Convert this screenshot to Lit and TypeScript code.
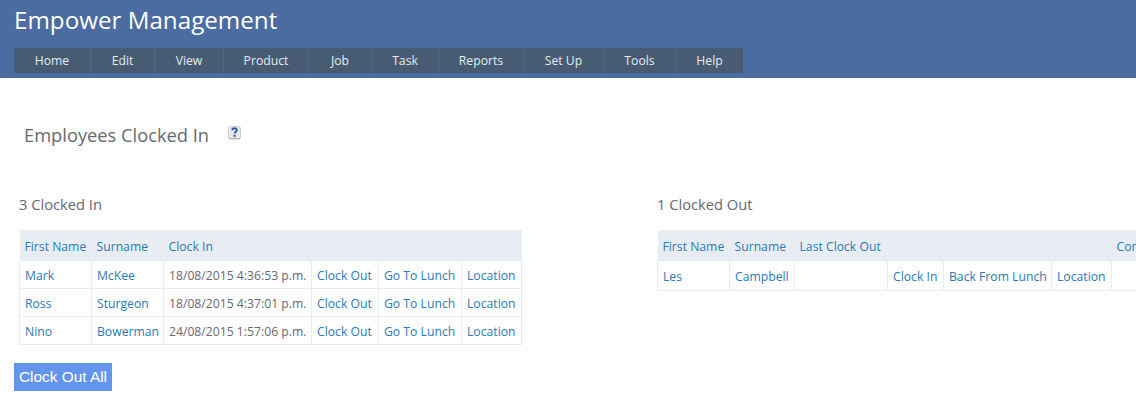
import { css, html, LitElement } from 'lit';
import { customElement } from 'lit/decorators.js';

const MENU = ['Home', 'Edit', 'View', 'Product', 'Job', 'Task', 'Reports', 'Set Up', 'Tools', 'Help'];

const CLOCKED_IN = [
  { first: 'Mark', last: 'McKee', time: '18/08/2015 4:36:53 p.m.' },
  { first: 'Ross', last: 'Sturgeon', time: '18/08/2015 4:37:01 p.m.' },
  { first: 'Nino', last: 'Bowerman', time: '24/08/2015 1:57:06 p.m.' },
];

@customElement('app-root')
export class AppRoot extends LitElement {
  static override styles = css`
    :host {
      display: block;
      width: 1136px;
      height: 418px;
      overflow: hidden;
      background: #fff;
      font-family: 'Open Sans', 'Liberation Sans', sans-serif;
      font-size: 12.2px;
      color: #666a70;
    }
    .banner {
      height: 78px;
      box-sizing: border-box;
      padding: 5px 14px 0;
      background: #4a6ca0;
    }
    .brand {
      height: 43px;
      font-size: 24.2px;
      line-height: 30px;
      color: #fff;
    }
    .menu {
      display: grid;
      grid-template-columns: 76px 64px 69px 85px 63px 67px 85px 80px 72px 68px;
      width: 729px;
      height: 25px;
    }
    .menu span {
      display: flex;
      align-items: center;
      justify-content: center;
      background: #475c72;
      border-left: 1px solid #4f6785;
      color: #e6ebf0;
      font-size: 12.2px;
    }
    .menu span:first-child {
      border-left: none;
    }
    .heading {
      display: flex;
      align-items: flex-start;
      gap: 19px;
      padding: 45px 0 0 24px;
      height: 72px;
      box-sizing: border-box;
      font-size: 18.3px;
      line-height: 24px;
    }
    .heading svg {
      margin-top: 3px;
    }
    .panels {
      display: flex;
      align-items: flex-start;
      padding: 0 0 0 19px;
      margin-top: 44px;
    }
    .panel-in {
      flex: 0 0 638px;
    }
    .panel-out {
      flex: 0 0 auto;
    }
    h2 {
      margin: 0 0 16px;
      height: 20px;
      font-size: 14.7px;
      font-weight: 400;
      line-height: 20px;
    }
    table {
      border-collapse: collapse;
      table-layout: fixed;
    }
    .in {
      width: 503px;
    }
    .out {
      width: 600px;
    }
    th {
      height: 30px;
      padding: 3px 0 0 5px;
      background: #e8edf3;
      color: #2a7ab8;
      font-weight: 400;
      text-align: left;
      white-space: nowrap;
      box-sizing: border-box;
    }
    td {
      height: 28px;
      padding: 2px 0 0 5px;
      border: 1px solid #e8ecf2;
      white-space: nowrap;
      box-sizing: border-box;
    }
    .out td {
      height: 30px;
    }
    a {
      color: #2a7ab8;
      text-decoration: none;
    }
    .w-72 { width: 72px; }
    .w-65 { width: 65px; }
    .w-93 { width: 93px; }
    .w-56 { width: 56px; }
    .w-108 { width: 108px; }
    .w-60 { width: 60px; }
    .w-148 { width: 148px; }
    .w-67 { width: 67px; }
    .w-83 { width: 83px; }
    .clock-all {
      display: block;
      width: 98px;
      height: 28px;
      margin: 18px 0 0 -5px;
      padding: 0;
      border: none;
      background: #6495ed;
      color: #fff;
      font-family: 'Liberation Sans', Arial, sans-serif;
      font-size: 15.4px;
    }
  `;

  override render() {
    return html`
      <header class="banner">
        <div class="brand">Empower Management</div>
        <nav class="menu">${MENU.map((m) => html`<span>${m}</span>`)}</nav>
      </header>
      <div class="heading">
        <span>Employees Clocked In</span>
        <svg width="13" height="14" viewBox="0 0 13 14" aria-label="Help">
          <rect x="0.5" y="0.5" width="12" height="12.5" rx="2" fill="#e6e8eb" stroke="#c9cdd1" />
          <path d="M1 12.5H12" stroke="#a9aeb3" />
          <path d="M4.3 4.2C4.4 1.6 8.8 1.6 8.8 4.2C8.8 5.8 6.6 5.8 6.6 7.6" fill="none" stroke="#2b5f9e" stroke-width="1.9" />
          <rect x="5.6" y="8.8" width="2" height="2" fill="#2b5f9e" />
        </svg>
      </div>
      <div class="panels">
        <section class="panel-in">
          <h2>3 Clocked In</h2>
          <table class="in">
            <thead>
              <tr>
                <th class="w-72">First Name</th>
                <th class="w-72">Surname</th>
                <th class="w-148">Clock In</th>
                <th class="w-67"></th>
                <th class="w-83"></th>
                <th></th>
              </tr>
            </thead>
            <tbody>
              ${CLOCKED_IN.map(
                (r) => html`
                  <tr>
                    <td><a>${r.first}</a></td>
                    <td><a>${r.last}</a></td>
                    <td>${r.time}</td>
                    <td><a>Clock Out</a></td>
                    <td><a>Go To Lunch</a></td>
                    <td><a>Location</a></td>
                  </tr>
                `,
              )}
            </tbody>
          </table>
          <button class="clock-all">Clock Out All</button>
        </section>
        <section class="panel-out">
          <h2>1 Clocked Out</h2>
          <table class="out">
            <thead>
              <tr>
                <th class="w-72">First Name</th>
                <th class="w-65">Surname</th>
                <th class="w-93">Last Clock Out</th>
                <th class="w-56"></th>
                <th class="w-108"></th>
                <th class="w-60"></th>
                <th>Comments</th>
              </tr>
            </thead>
            <tbody>
              <tr>
                <td><a>Les</a></td>
                <td><a>Campbell</a></td>
                <td></td>
                <td><a>Clock In</a></td>
                <td><a>Back From Lunch</a></td>
                <td><a>Location</a></td>
                <td></td>
              </tr>
            </tbody>
          </table>
        </section>
      </div>
    `;
  }
}
